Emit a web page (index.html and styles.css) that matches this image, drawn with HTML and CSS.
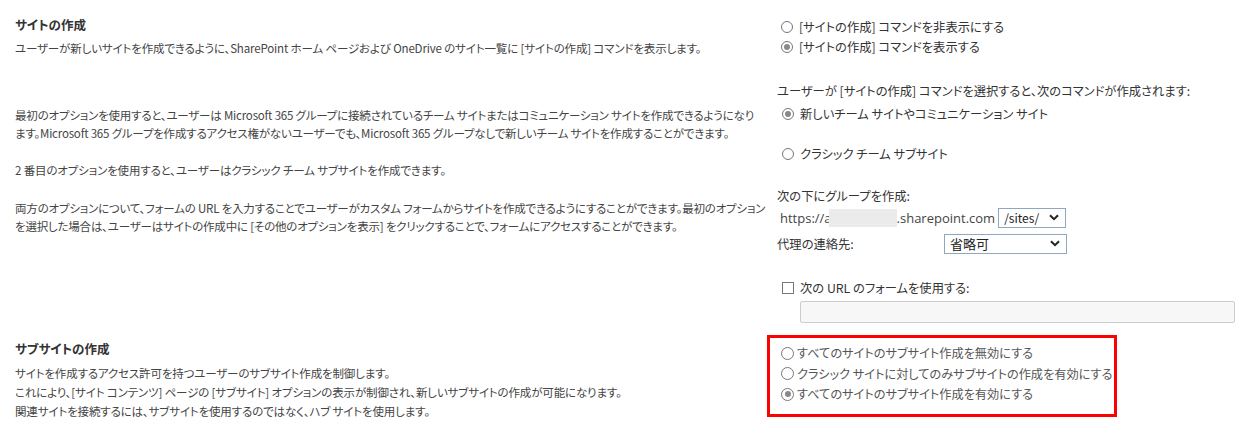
FILE: index.html
```html
<!DOCTYPE html>
<html lang="ja">
<head>
<meta charset="utf-8">
<link rel="stylesheet" href="styles.css">
</head>
<body>
<div class="page">
  <section class="row row-one">
    <div class="left">
      <h2 class="title">サイトの作成</h2>
      <p class="desc">ユーザーが新しいサイトを作成できるように、SharePoint ホーム ページおよび OneDrive のサイト一覧に [サイトの作成] コマンドを表示します。</p>
      <p class="para p1 fixed">最初のオプションを使用すると、ユーザーは Microsoft 365 グループに接続されているチーム サイトまたはコミュニケーション サイトを作成できるようになり<br>ます。Microsoft 365 グループを作成するアクセス権がないユーザーでも、Microsoft 365 グループなしで新しいチーム サイトを作成することができます。</p>
      <p class="para p2">2 番目のオプションを使用すると、ユーザーはクラシック チーム サブサイトを作成できます。</p>
      <p class="para p3 fixed">両方のオプションについて、フォームの URL を入力することでユーザーがカスタム フォームからサイトを作成できるようにすることができます。最初のオプション<br>を選択した場合は、ユーザーはサイトの作成中に [その他のオプションを表示] をクリックすることで、フォームにアクセスすることができます。</p>
    </div>
    <div class="right">
      <div class="opts top-opts">
        <label class="opt"><span class="radio"></span>[サイトの作成] コマンドを非表示にする</label>
        <label class="opt"><span class="radio on"></span>[サイトの作成] コマンドを表示する</label>
      </div>
      <div class="txt when">ユーザーが [サイトの作成] コマンドを選択すると、次のコマンドが作成されます:</div>
      <label class="opt sub first"><span class="radio on"></span>新しいチーム サイトやコミュニケーション サイト</label>
      <label class="opt sub second"><span class="radio"></span>クラシック チーム サブサイト</label>
      <div class="txt under">次の下にグループを作成:</div>
      <div class="url-row">
        <span class="url">https://a<span class="blur"></span>.sharepoint.com</span>
        <span class="select sel-sites">/sites/<span class="chev"><svg viewBox="0 0 10 7" width="10" height="7"><path d="M1 1.2 L5 5.2 L9 1.2" fill="none" stroke="#222" stroke-width="2"/></svg></span></span>
      </div>
      <div class="contact-row">
        <span class="txt label">代理の連絡先:</span>
        <span class="select sel-contact">省略可<span class="chev"><svg viewBox="0 0 10 7" width="10" height="7"><path d="M1 1.2 L5 5.2 L9 1.2" fill="none" stroke="#222" stroke-width="2"/></svg></span></span>
      </div>
      <label class="opt check-row"><span class="checkbox"></span>次の URL のフォームを使用する:</label>
      <div class="url-input"></div>
    </div>
  </section>
  <section class="row row-two">
    <div class="left">
      <h2 class="title">サブサイトの作成</h2>
      <p class="lines">サイトを作成するアクセス許可を持つユーザーのサブサイト作成を制御します。<br>これにより、[サイト コンテンツ] ページの [サブサイト] オプションの表示が制御され、新しいサブサイトの作成が可能になります。<br>関連サイトを接続するには、サブサイトを使用するのではなく、ハブ サイトを使用します。</p>
    </div>
    <div class="right">
      <div class="boxed">
        <label class="opt big"><span class="radio"></span>すべてのサイトのサブサイト作成を無効にする</label>
        <label class="opt big"><span class="radio"></span>クラシック サイトに対してのみサブサイトの作成を有効にする</label>
        <label class="opt big"><span class="radio on"></span>すべてのサイトのサブサイト作成を有効にする</label>
      </div>
    </div>
  </section>
</div>
</body>
</html>
```

FILE: styles.css
```css
* { box-sizing: border-box; }
html, body { margin: 0; padding: 0; background: #fff; }
body {
  font-family: "Noto Sans CJK JP", "Noto Sans", sans-serif;
  font-feature-settings: "palt";
  font-size: 12px;
  color: #444;
  overflow: hidden;
}
.page { width: 1235px; height: 438px; }
.row { display: flex; }
.left { width: 762px; padding-left: 15px; padding-right: 14px; }
.left p { font-size: 11.5px; letter-spacing: -0.15px; }
.left p.fixed { white-space: nowrap; letter-spacing: -0.2px; }
.right { flex: 1; padding-left: 15px; font-size: 12.3px; }

.title { margin: 0; font-size: 12.5px; font-weight: bold; color: #333; line-height: 18px; }
p { margin: 0; line-height: 18px; }

.row-one { padding-top: 16px; height: 324px; }
.row-one .desc { margin-top: 5px; }
.row-one .p1 { margin-top: 49px; }
.row-one .p2 { margin-top: 19px; }
.row-one .p3 { margin-top: 20px; }

.row-two .title { margin-top: 16px; }
.row-two .lines { margin-top: 6px; line-height: 19px; }

.opt { display: flex; align-items: center; line-height: 20px; color: #333; white-space: nowrap; }
.txt { line-height: 20px; color: #333; white-space: nowrap; }
.top-opts { margin-top: 1px; }
.top-opts .opt { padding-left: 4px; }
.when { margin-top: 24px; }
.sub { padding-left: 5px; margin-top: 3px; }
.sub.second { margin-top: 20px; }
.under { margin-top: 22px; }

.radio {
  width: 12px; height: 12px; border-radius: 50%;
  border: 1px solid #777; background: #fff;
  display: inline-block; margin-right: 6px; position: relative; flex: none;
}
.radio.on::after {
  content: ""; position: absolute; left: 2px; top: 2px;
  width: 6px; height: 6px; border-radius: 50%; background: #888;
}
.checkbox {
  width: 12px; height: 12px; border: 1px solid #777; background: #fff;
  display: inline-block; margin-right: 6px; flex: none;
}

.url-row { display: flex; align-items: center; margin-top: 1px; padding-left: 3px; height: 21px; }
.url { color: #444; font-family: "Open Sans", "Noto Sans", sans-serif; font-size: 13px; display: inline-flex; align-items: center; }
.blur { display: inline-block; width: 68px; height: 18px; background: #ebebeb; margin-left: -3px; }
.select {
  display: inline-flex; align-items: center; justify-content: space-between;
  border: 1px solid #8fa8c0; background: #fff; color: #222;
  height: 20px; padding: 0 6px 0 5px; font-size: 12px;
}
.sel-sites { width: 68px; margin-left: 3px; }
.sel-contact { width: 123px; font-size: 13px; }
.chev { display: inline-flex; align-items: center; }

.contact-row { display: flex; align-items: center; margin-top: 5px; height: 21px; }
.contact-row .label { width: 167px; }

.check-row { margin-top: 24px; padding-left: 5px; }
.url-input {
  margin-top: 3px; margin-left: 23px; height: 22px;
  border: 1px solid #ccc; background: #f7f7f7; border-radius: 2px;
}

.boxed {
  margin-left: -10px; margin-top: 11px;
  width: 350px; height: 82px;
  border: 3px solid #f00;
  padding: 5px 0 0 11px;
}
.opt.big { font-size: 12.2px; color: #555; line-height: 20.5px; }
.opt.big .radio { margin-right: 3px; width: 13px; height: 13px; }
.opt.big .radio.on::after { left: 2.5px; top: 2.5px; }
```
